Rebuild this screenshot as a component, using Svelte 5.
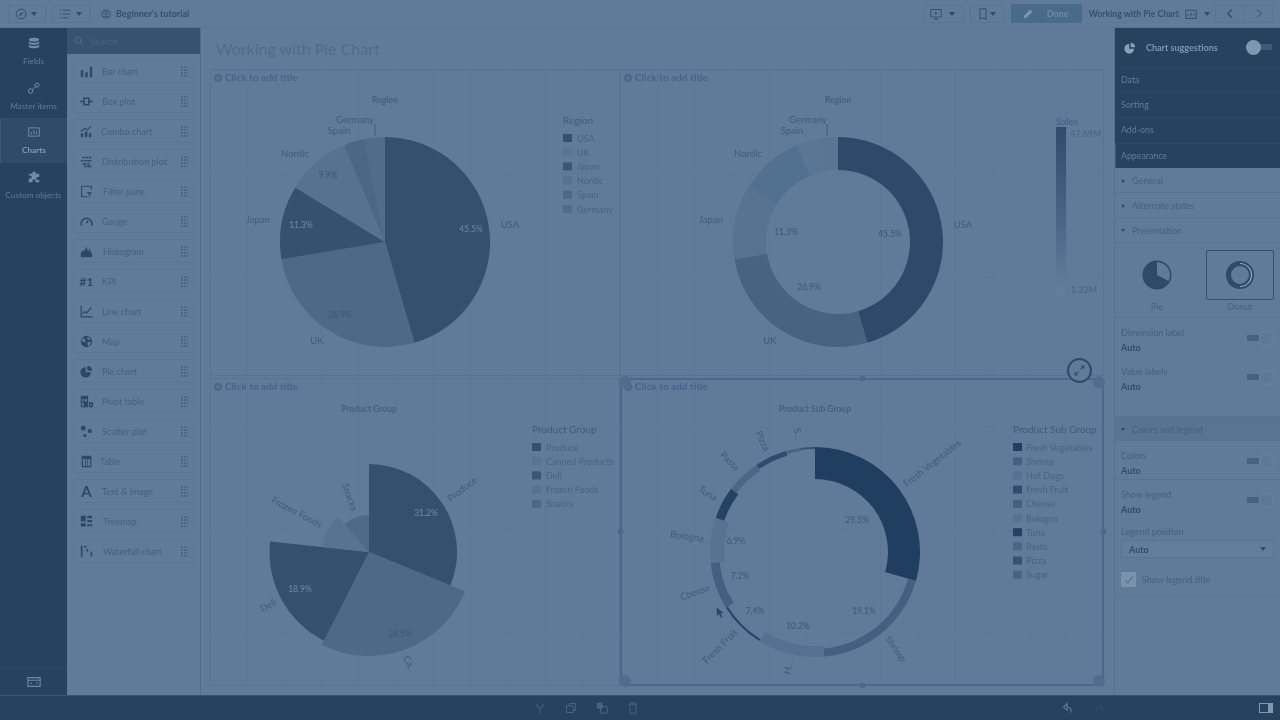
<script>
  const rad = (a) => (a * Math.PI) / 180;

  function sector(cx, cy, r0, r1, a0, a1) {
    const large = a1 - a0 > 180 ? 1 : 0;
    const p = (r, a) => `${(cx + r * Math.sin(rad(a))).toFixed(2)} ${(cy - r * Math.cos(rad(a))).toFixed(2)}`;
    if (r0 === 0) return `M${cx} ${cy}L${p(r1, a0)}A${r1} ${r1} 0 ${large} 1 ${p(r1, a1)}Z`;
    return `M${p(r0, a0)}L${p(r1, a0)}A${r1} ${r1} 0 ${large} 1 ${p(r1, a1)}L${p(r0, a1)}A${r0} ${r0} 0 ${large} 0 ${p(r0, a0)}Z`;
  }

  const regionLabels = (dx) => [
    { t: 'Germany', x: 355 + dx, y: 119 },
    { t: 'Spain', x: 339 + dx, y: 130 },
    { t: 'Nordic', x: 295 + dx, y: 153 },
    { t: 'Japan', x: 258 + dx, y: 219 },
    { t: 'USA', x: 510 + dx, y: 224 },
    { t: 'UK', x: 317 + dx, y: 340 }
  ];

  const cards = [
    {
      box: [211, 70, 408, 305], grid: 'upper', title: 'Region', tx: 385, ty: 100, cx: 385, cy: 242,
      slices: [
        [0, 105, 0, 163.8, '#34506f'],
        [0, 105, 163.8, 260.6, '#4c6988'],
        [0, 105, 260.6, 301.3, '#35516f'],
        [0, 105, 301.3, 337, '#557290'],
        [0, 105, 337, 348.5, '#4a6786'],
        [0, 105, 348.5, 360, '#4f6c8b']
      ],
      labels: regionLabels(0),
      lines: [[375, 124, 375, 136]],
      pcts: [
        { t: '45.5%', x: 471, y: 229, light: true },
        { t: '26.9%', x: 340, y: 315 },
        { t: '11.3%', x: 301, y: 225, light: true },
        { t: '9.9%', x: 328, y: 175 }
      ],
      legend: {
        x: 563, y: 120, tx: 577, head: 'Region',
        items: [['USA', '#34506f'], ['UK', '#58758f'], ['Japan', '#3a5675'], ['Nordic', '#557290'], ['Spain', '#4b6887'], ['Germany', '#4f6c8b']]
      }
    },
    {
      box: [621, 70, 482, 305], grid: 'upper', title: 'Region', tx: 838, ty: 100, cx: 838, cy: 242,
      slices: [
        [72, 105, 0, 163.8, '#2d4a6a'],
        [72, 105, 163.8, 260.6, '#466382'],
        [72, 105, 260.6, 301.3, '#567391'],
        [72, 105, 301.3, 337, '#527090'],
        [72, 105, 337, 348.5, '#5a7695'],
        [72, 105, 348.5, 360, '#597594']
      ],
      labels: regionLabels(453),
      lines: [[827, 124, 827, 136]],
      pcts: [
        { t: '45.5%', x: 890, y: 234 },
        { t: '26.9%', x: 809, y: 287 },
        { t: '11.3%', x: 786, y: 232 }
      ],
      scale: true
    },
    {
      box: [211, 379, 408, 306], grid: 'lower', title: 'Product Group', tx: 369, ty: 409, cx: 369, cy: 552,
      slices: [
        [0, 88, 0, 112.3, '#34506f'],
        [0, 104, 112.3, 207, '#4c6988'],
        [0, 99.5, 207, 276, '#34506f'],
        [0, 47, 276, 318.5, '#567391'],
        [0, 37, 318.5, 360, '#4d6a89']
      ],
      labels: [
        { t: 'Snacks', x: 350, y: 497, r: 70 },
        { t: 'Frozen Foods', x: 297, y: 512, r: 28 },
        { t: 'Produce', x: 462, y: 489, r: -37 },
        { t: 'Deli', x: 268, y: 605, r: -30 },
        { t: 'Ca...', x: 410, y: 664, r: 65 }
      ],
      lines: [],
      pcts: [
        { t: '31.2%', x: 426, y: 513, light: true },
        { t: '18.9%', x: 300, y: 589, light: true },
        { t: '28.5%', x: 400, y: 634 }
      ],
      legend: {
        x: 532, y: 429, tx: 546, head: 'Product Group',
        items: [['Produce', '#34506f'], ['Canned Products', '#58758f'], ['Deli', '#3a5675'], ['Frozen Foods', '#557290'], ['Snacks', '#4b6887']]
      }
    },
    {
      box: [621, 379, 482, 306], grid: 'lower', title: 'Product Sub Group', tx: 815, ty: 409, cx: 815, cy: 552,
      slices: [
        [73, 105, 0, 106, '#1f3e60'],
        [97, 105, 106, 175, '#42607f'],
        [94, 105, 175, 212, '#557191'],
        [103, 105, 212, 238, '#26456a'],
        [96, 105, 238, 264, '#42607f'],
        [91, 105, 264, 289, '#577392'],
        [96, 105, 289, 307, '#234264'],
        [98, 105, 307, 326, '#4a6786'],
        [100, 105, 326, 344, '#2e4c70'],
        [102, 105, 344, 352, '#476583'],
        [103, 105, 352, 360, '#35526f']
      ],
      labels: [
        { t: 'Fresh Vegetables', x: 932, y: 463, r: -38 },
        { t: 'Pizza', x: 763, y: 441, r: 65 },
        { t: 'S...', x: 798, y: 434, r: 80 },
        { t: 'Pasta', x: 730, y: 461, r: 45 },
        { t: 'Tuna', x: 708, y: 493, r: 32 },
        { t: 'Bologna', x: 687, y: 536, r: 8 },
        { t: 'Cheese', x: 695, y: 592, r: -20 },
        { t: 'Fresh Fruit', x: 720, y: 646, r: -45 },
        { t: 'H...', x: 788, y: 667, r: -75 },
        { t: 'Shrimp', x: 896, y: 649, r: 55 }
      ],
      lines: [],
      pcts: [
        { t: '29.5%', x: 857, y: 520 },
        { t: '6.9%', x: 736, y: 541 },
        { t: '7.2%', x: 740, y: 576 },
        { t: '19.1%', x: 864, y: 611 },
        { t: '7.4%', x: 755, y: 611 },
        { t: '10.2%', x: 798, y: 626 }
      ],
      legend: {
        x: 1013, y: 429, tx: 1026, head: 'Product Sub Group',
        items: [
          ['Fresh Vegetables', '#1f3e60'], ['Shrimp', '#42607f'], ['Hot Dogs', '#557191'], ['Fresh Fruit', '#2d4c70'], ['Cheese', '#42607f'],
          ['Bologna', '#577392'], ['Tuna', '#234264'], ['Pasta', '#4a6786'], ['Pizza', '#35526f'], ['Sugar', '#476583']
        ]
      },
      selected: true
    }
  ];

  const items = [
    { name: 'Bar chart', f: 'M1 6h3v9H1zM6.5 9h3v6h-3zM12 2h3v13h-3z' },
    { name: 'Box plot', f: 'M4 3h8v10H4zM6 5v6h4V5zM0 7h4v2H0zM12 7h4v2h-4z' },
    { name: 'Combo chart', dx: -1, f: 'M1 10h3v5H1zM6 8h3v7H6zM11 10h3v5h-3z', s: 'M1 8l5-4 3 2 5-5' },
    { name: 'Distribution plot', f: 'M3 2h3v2H3zM7 2h3v2H7zM11 2h3v2h-3zM1 6h3v2H1zM5 6h3v2H5zM9 6h5v2H9zM3 10h5v2H3zM9 10h3v2H9zM5 13h3v2H5zM9 13h5v2H9z' },
    { name: 'Filter pane', dx: 1, f: 'M8 9h7l-3 3v3h-1v-3z', s: 'M14 6V1.5H2v13h7' },
    { name: 'Gauge', s: 'M2 13A6.5 6.5 0 1 1 14 13M8 10l2-3', w: 2 },
    { name: 'Histogram', dx: 1, f: 'M1 15V9l2-1 1-2 2 1 1-5 2 3 1 3 2-4 1 4 2 3v4z' },
    { name: 'KPI', kpi: true },
    { name: 'Line chart', s: 'M1.5 1v13.5h14M3 11l3-3 2 2 6-7', w: 1.5 },
    { name: 'Map', f: 'M8 1a7 7 0 1 0 0 14A7 7 0 0 0 8 1zM3 4l3 1 1 3-2 1-3-2zM9 2l4 2-2 2-2-1zM9 9l4-1 0 3-3 3z' },
    { name: 'Pie chart', f: 'M7 2.5A6.5 6.5 0 1 0 13.5 9H7zM9 1v6h6a6 6 0 0 0-6-6z' },
    { name: 'Pivot table', f: 'M1 1h9v14H1zM2.500 5v3h2V5zM6 5v3h2.500V5zM2.500 9.500v4h2v-4zM11 9h5v6h-5zM12.500 11v2h2v-2z' },
    { name: 'Scatter plot', f: 'M4 1a3 3 0 1 0 0 6 3 3 0 0 0 0-6zM12 5a2.500 2.500 0 1 0 0 5 2.500 2.500 0 0 0 0-5zM6 11a2 2 0 1 0 0 4 2 2 0 0 0 0-4z' },
    { name: 'Table', dx: -2, f: 'M2 1h12v14H2zM3.500 5v8.500h2.500V5zM7 5v8.500h2V5zM10 5v8.500h2.500V5z' },
    { name: 'Text & image', letter: 'A' },
    { name: 'Treemap', dx: 1, f: 'M1 1h6v7H1zM9 1h6v3H9zM9 6h6v3H9zM1 10h6v4H1zM9 11h3v3H9zM13 11h2v3h-2z' },
    { name: 'Waterfall chart', dx: 1, f: 'M1 1h2v14H1zM5 1h3v2H5zM8 5h2v3H8zM13 8h2v6h-2z' }
  ];

  const rail = [
    { name: 'Fields', d: 'M8 1c4 0 7 1 7 2.500S12 6 8 6 1 5 1 3.500 4 1 8 1zM1 5.500C2 7 5 7.500 8 7.500S14 7 15 5.500V8c0 1.500-3 2.500-7 2.500S1 9.500 1 8zM1 10c1 1.500 4 2 7 2s6-.5 7-2v2.500C15 14 12 15 8 15s-7-1-7-2.500z' },
    { name: 'Master items', s: 'M5 11l6-6M3.500 9a3 3 0 1 0 3 3 3 3 0 0 0-3-3zM12 1.500a2.700 2.700 0 1 0 2.700 2.700A2.700 2.700 0 0 0 12 1.500z' },
    { name: 'Charts', active: true, s: 'M1 2.500h14v11H1zM4.500 11V8M8 11V5.500M11.500 11V7' },
    { name: 'Custom objects', d: 'M6 1h4v2.500h5V8h-2a2 2 0 1 0 0 4h2v3h-5v-2a2 2 0 1 0-4 0v2H1v-5h2a2 2 0 1 0 0-4H1V3.500h5z' }
  ];

  const editIcons = [
    { s: 'M8 15V7M4 2v4l4 2 4-2V2' },
    { s: 'M6 5V2h8v9h-3M2 5h9v9H2z' },
    { f: 'M1 1h8v8H1z', s: 'M6 6h9v9H6z' },
    { s: 'M3 3h10M5 3V1h6v2M4 3v12h8V3' }
  ];
</script>

{#snippet toggle(on)}
  <span class="toggle" class:off={!on}><i></i></span>
{/snippet}

{#snippet caret()}
  <span class="caret"></span>
{/snippet}

<div class="app">
  <header class="toolbar">
    <div class="tbtn" style="width:38px">
      <svg viewBox="0 0 16 16" class="ti"><circle cx="8" cy="8" r="6.500" /><path d="M11 5L9 9 5 11 7 7z" class="solid" /></svg>
      {@render caret()}
    </div>
    <div class="tbtn" style="width:39px">
      <svg viewBox="0 0 16 16" class="ti"><path d="M1 3h2M5 3h10M1 8h2M5 8h10M1 13h2M5 13h7" /></svg>
      {@render caret()}
    </div>
    <svg viewBox="0 0 16 16" class="globe"><circle cx="8" cy="8" r="7" /><path d="M2 8h12M8 1v14M3 4h10M3 12h10" /></svg>
    <b class="app-name">Beginner's tutorial</b>
    <div class="spacer"></div>
    <div class="tbtn" style="width:41px">
      <svg viewBox="0 0 16 16" class="ti"><path d="M1 2h14v10H1zM8 12v3M5 15h6" /><path d="M6.500 5l4 2-4 2z" class="solid" /></svg>
      {@render caret()}
    </div>
    <div class="tbtn" style="width:35px">
      <svg viewBox="0 0 16 16" class="ti"><path d="M4 1h8v14l-4-2-4 2z" /></svg>
      {@render caret()}
    </div>
    <div class="done">
      <svg viewBox="0 0 16 16"><path d="M2 14l1-4 8-8 3 3-8 8z" /></svg>
      <span>Done</span>
    </div>
    <b class="sheet-name">Working with Pie Chart</b>
    <svg viewBox="0 0 16 16" class="ti sheeticon"><path d="M1 3h14v11H1zM4 11V8M8 11V6M12 11V7" /></svg>
    {@render caret()}
    <div class="nav first"><svg viewBox="0 0 16 16"><path d="M10 2L4 8l6 6" /></svg></div>
    <div class="nav"><svg viewBox="0 0 16 16" class="dim"><path d="M6 2l6 6-6 6" /></svg></div>
  </header>

  <div class="body">
    <nav class="rail">
      {#each rail as r}
        <div class="rail-item" class:active={r.active}>
          <svg viewBox="0 0 16 16">
            {#if r.d}<path d={r.d} class="solid" />{/if}
            {#if r.s}<path d={r.s} />{/if}
          </svg>
          <span>{r.name}</span>
        </div>
      {/each}
      <div class="spacer"></div>
      <div class="rail-foot">
        <svg viewBox="0 0 16 16"><path d="M1 3h14v10H1zM1 6h14" /><path d="M4 8l2 1.500L4 11zM12 8l-2 1.500 2 1.500z" class="solid" /></svg>
      </div>
    </nav>

    <aside class="assets">
      <div class="search">
        <svg viewBox="0 0 16 16"><circle cx="6.500" cy="6.500" r="5" /><path d="M10 10l5 5" /></svg>
        <span>Search</span>
      </div>
      <ul>
        {#each items as it}
          <li>
            <span class="ic">
              {#if it.kpi}
                <b class="kpi">#1</b>
              {:else if it.letter}
                <b class="letter">{it.letter}</b>
              {:else}
                <svg viewBox="0 0 16 16">
                  {#if it.f}<path d={it.f} fill-rule="evenodd" class="solid" />{/if}
                  {#if it.s}<path d={it.s} stroke-width={it.w || 1.3} />{/if}
                </svg>
              {/if}
            </span>
            <span class="label" style="margin-left:{it.dx || 0}px">{it.name}</span>
            <span class="grip"></span>
          </li>
        {/each}
      </ul>
    </aside>

    <main>
      <h1>Working with Pie Chart</h1>
      <div class="sheet">
        {#each cards as c}
          <section class="card {c.grid}" class:selected={c.selected}>
            <div class="card-title">
              <svg viewBox="0 0 16 16"><circle cx="8" cy="8" r="8" /><path d="M4 8h8M8 4v8" /></svg>
              <b>Click to add title</b>
            </div>
            <svg class="chart" viewBox={c.box.join(' ')}>
              <text class="ctitle" x={c.tx} y={c.ty}>{c.title}</text>
              {#each c.slices as s}
                <path d={sector(c.cx, c.cy, s[0], s[1], s[2], s[3])} fill={s[4]} />
              {/each}
              {#each c.lines as l}
                <line x1={l[0]} y1={l[1]} x2={l[2]} y2={l[3]} class="leader" />
              {/each}
              {#each c.labels as l}
                <text class="dim-label" x={l.x} y={l.y} transform={l.r ? `rotate(${l.r} ${l.x} ${l.y})` : undefined}>{l.t}</text>
              {/each}
              {#each c.pcts as p}
                <text class="pct" class:light={p.light} x={p.x} y={p.y}>{p.t}</text>
              {/each}
              {#if c.legend}
                <text class="lhead" x={c.legend.x} y={c.legend.y}>{c.legend.head}</text>
                {#each c.legend.items as li, i}
                  <rect x={c.legend.x} y={c.legend.y + 14 + i * 14.2} width="9" height="8" fill={li[1]} />
                  <text class="litem" x={c.legend.tx} y={c.legend.y + 18 + i * 14.2}>{li[0]}</text>
                {/each}
              {/if}
              {#if c.scale}
                <defs>
                  <linearGradient id="sales" x1="0" y1="0" x2="0" y2="1">
                    <stop offset="0" stop-color="#2f4c6d" />
                    <stop offset="0.5" stop-color="#466384" />
                    <stop offset="1" stop-color="#647f9d" />
                  </linearGradient>
                </defs>
                <text class="lhead" x="1056" y="121">Sales</text>
                <rect x="1056" y="127" width="10" height="168" fill="url(#sales)" />
                <text class="litem" x="1070" y="133">47.69M</text>
                <text class="litem" x="1071" y="289">1.32M</text>
              {/if}
            </svg>
            {#if c.selected}
              <span class="h c tl"></span><span class="h c tr"></span><span class="h c bot-l"></span><span class="h c bot-r"></span>
              <span class="h m mt"></span><span class="h m mb"></span><span class="h m ml"></span><span class="h m mr"></span>
              <span class="expand">
                <svg viewBox="0 0 16 16"><path d="M9 7l4-4M10 2.500h3.500V6M7 9l-4 4M6 13.500H2.500V10" /></svg>
              </span>
              <svg class="cursor" viewBox="0 0 12 16"><path d="M1 1v12l3-3 2.500 5 2-1L6 9h4z" /></svg>
            {/if}
          </section>
        {/each}
      </div>
    </main>

    <aside class="props">
      <div class="props-dark">
        <div class="suggest">
          <svg viewBox="0 0 16 16"><path d="M7 2.500A6.500 6.500 0 1 0 13.500 9H7zM9 1v6h6a6 6 0 0 0-6-6z" /></svg>
          <b>Chart suggestions</b>
          {@render toggle(false)}
        </div>
        <div class="tab">Data</div>
        <div class="tab">Sorting</div>
        <div class="tab tall">Add-ons</div>
        <div class="tab last">Appearance</div>
      </div>
      <div class="sec"><span class="tri right"></span>General</div>
      <div class="sec"><span class="tri right"></span>Alternate states</div>
      <div class="sec"><span class="tri"></span>Presentation</div>
      <div class="pres">
        <div class="style-opt">
          <div class="thumb">
            <svg viewBox="0 0 30 30"><circle cx="15" cy="15" r="14.500" class="pie" /><path d="M15 15V2a13 13 0 0 1 11.500 19z" class="pie-cut" /></svg>
          </div>
          <span>Pie</span>
        </div>
        <div class="style-opt">
          <div class="thumb picked">
            <svg viewBox="0 0 30 30"><circle cx="15" cy="15" r="11.500" class="ring" /><path d="M15 3.500a11.500 11.500 0 0 1 0 23" class="ring-cut" /></svg>
          </div>
          <span>Donut</span>
        </div>
      </div>
      <div class="prop">
        <div><span>Dimension label</span><b>Auto</b></div>
        {@render toggle(true)}
      </div>
      <div class="prop">
        <div><span>Value labels</span><b>Auto</b></div>
        {@render toggle(true)}
      </div>
      <div class="sec band"><span class="tri"></span>Colors and legend</div>
      <div class="prop lined">
        <div><span>Colors</span><b>Auto</b></div>
        {@render toggle(true)}
      </div>
      <div class="prop">
        <div><span>Show legend</span><b>Auto</b></div>
        {@render toggle(true)}
      </div>
      <div class="legend-pos">
        <span>Legend position</span>
        <div class="select"><b>Auto</b>{@render caret()}</div>
      </div>
      <div class="check">
        <span class="box"><svg viewBox="0 0 16 16"><path d="M3 8l3.500 4L13 3" /></svg></span>
        <span>Show legend title</span>
      </div>
    </aside>
  </div>

  <footer class="foot">
    <div class="edit-icons">
      {#each editIcons as b}
        <svg viewBox="0 0 16 16">
          {#if b.f}<path d={b.f} class="solid" />{/if}
          <path d={b.s} />
        </svg>
      {/each}
    </div>
    <div class="undo">
      <svg viewBox="0 0 16 16"><path d="M12 14c1-5-1-7-6-7M7 2L2 7l5 4z" class="strong" /></svg>
      <svg viewBox="0 0 16 16" class="faint"><path d="M4 12c0-4 2-5 6-5M9 3l4 4-4 3" /></svg>
    </div>
    <div class="panel-btn"><i></i></div>
  </footer>
</div>

<style>
  :global(body) {
    margin: 0;
    background: #607b99;
  }
  .app {
    width: 1280px;
    height: 720px;
    overflow: hidden;
    display: flex;
    flex-direction: column;
    background: #607b99;
    color: #43607f;
    font-family: Lato, "Open Sans", sans-serif;
    font-size: 9px;
    filter: blur(0.45px);
  }
  svg {
    display: block;
    fill: none;
    stroke: currentColor;
    stroke-width: 1.3;
  }
  svg .solid {
    fill: currentColor;
    stroke: none;
  }
  .spacer {
    flex: 1;
  }

  .toolbar {
    height: 28px;
    flex: none;
    display: flex;
    align-items: center;
    box-sizing: border-box;
    padding: 0 7px 0 8px;
    border-bottom: 1px solid #5a7594;
    color: #2f4b6c;
  }
  .tbtn {
    height: 18px;
    margin-right: 6px;
    box-sizing: border-box;
    border: 1px solid #587393;
    border-radius: 2px;
    display: flex;
    align-items: center;
    justify-content: space-between;
    padding: 0 8px 0 6px;
  }
  .ti {
    width: 12px;
    height: 12px;
    color: #34506f;
  }
  .caret {
    width: 0;
    height: 0;
    border-left: 3.5px solid transparent;
    border-right: 3.5px solid transparent;
    border-top: 4px solid #2f4b6c;
  }
  .globe {
    width: 10px;
    height: 10px;
    margin-left: 4px;
    color: #3f5b7b;
    stroke-width: 1.6;
  }
  .app-name {
    margin-left: 5px;
    font-size: 9px;
    color: #34506f;
  }
  .done {
    width: 71px;
    height: 19px;
    background: #4a6a8b;
    display: flex;
    align-items: center;
    color: #6e8aa6;
    font-weight: 700;
    box-sizing: border-box;
    padding-left: 11px;
  }
  .done svg {
    width: 12px;
    height: 12px;
    fill: #7c96b0;
    stroke: none;
  }
  .done span {
    margin-left: 13px;
  }
  .sheet-name {
    margin-left: 7px;
    font-size: 8.7px;
    color: #34506f;
  }
  .sheeticon {
    margin: 0 7px 0 6px;
  }
  .nav {
    width: 28px;
    height: 18px;
    box-sizing: border-box;
    border: 1px solid #587393;
    border-left: none;
    display: flex;
    align-items: center;
    justify-content: center;
    color: #2f4b6c;
  }
  .nav.first {
    margin-left: 5px;
    width: 30px;
    border-left: 1px solid #587393;
  }
  .nav svg {
    width: 11px;
    height: 11px;
    stroke-width: 2;
  }
  .nav svg.dim {
    color: #45617f;
  }

  .body {
    flex: 1;
    display: flex;
    min-height: 0;
  }

  .rail {
    width: 67px;
    flex: none;
    background: #26425f;
    display: flex;
    flex-direction: column;
    color: #5f7b98;
    box-sizing: border-box;
    padding-top: 1px;
  }
  .rail-item {
    height: 44.7px;
    display: flex;
    flex-direction: column;
    align-items: center;
    padding-top: 8px;
    box-sizing: border-box;
    gap: 7px;
    font-size: 8.2px;
    line-height: 10px;
  }
  .rail-item svg {
    width: 12px;
    height: 12px;
    color: #728ca6;
  }
  .rail-item.active {
    background: #2f4b69;
    border-left: 1px solid #3b5775;
    color: #8198b0;
    font-weight: 700;
  }
  .rail-foot {
    height: 26px;
    border-top: 1px solid #2c4866;
    display: flex;
    align-items: center;
    justify-content: center;
  }
  .rail-foot svg {
    width: 14px;
    height: 14px;
    color: #6c87a2;
  }

  .assets {
    width: 134px;
    flex: none;
    border-right: 1px solid #4f6c8b;
    box-sizing: border-box;
  }
  .search {
    height: 26px;
    background: #375270;
    display: flex;
    align-items: center;
    padding-left: 7px;
    color: #476380;
    gap: 7px;
  }
  .search svg {
    width: 10px;
    height: 10px;
    color: #56728f;
  }
  .assets ul {
    list-style: none;
    margin: 0;
    padding: 5px 6px 0;
    display: flex;
    flex-direction: column;
    gap: 6px;
  }
  .assets li {
    height: 24px;
    box-sizing: border-box;
    border: 1px solid #5a7695;
    border-radius: 2px;
    display: flex;
    align-items: center;
    padding-left: 6px;
    position: relative;
  }
  .ic {
    width: 13px;
    height: 13px;
    color: #2c4866;
    display: flex;
    align-items: center;
    justify-content: center;
    margin-right: 9px;
    flex: none;
  }
  .ic svg {
    width: 13px;
    height: 13px;
  }
  .kpi {
    font-size: 12px;
    white-space: nowrap;
  }
  .letter {
    font-size: 15px;
  }
  .label {
    flex: 1;
  }
  .grip {
    width: 8px;
    height: 12px;
    margin-right: 5px;
    background:
      linear-gradient(90deg, #607b99 1px, transparent 1px) 0 0 / 3px 3px,
      linear-gradient(#607b99 1px, transparent 1px) 0 0 / 3px 3px,
      #4a6685;
  }

  main {
    flex: 1;
    min-width: 0;
  }
  h1 {
    margin: 0;
    height: 42px;
    line-height: 42px;
    padding-left: 15px;
    font-size: 16px;
    font-weight: 400;
    color: #4f6b8b;
  }
  .sheet {
    margin-left: 10px;
    width: 892px;
    display: grid;
    grid-template-columns: 408px 482px;
    grid-template-rows: 305px 306px;
    column-gap: 2px;
    row-gap: 4px;
  }
  .card {
    position: relative;
    box-sizing: border-box;
    outline: 1px solid #587493;
    background-image:
      linear-gradient(90deg, #5c7896 1px, transparent 1px),
      linear-gradient(#5c7896 1px, transparent 1px);
    background-size: 37.2px 103px;
    background-position: 36px 0;
  }
  .card.lower {
    background-position: 36px 48px;
  }
  .card.selected {
    outline: 2px solid #4a698a;
    outline-offset: -1px;
  }
  .chart {
    width: 100%;
    height: 100%;
    stroke: none;
  }
  .card-title {
    position: absolute;
    left: 3px;
    top: 2px;
    display: flex;
    align-items: center;
    gap: 3px;
    color: #47638a;
    font-size: 10px;
    line-height: 11px;
  }
  .card-title svg {
    width: 8px;
    height: 8px;
    fill: #4b6889;
    stroke: #607b99;
    stroke-width: 2;
  }
  .card-title svg circle {
    stroke: none;
  }
  .ctitle {
    font-size: 8.5px;
    font-weight: 700;
    fill: #42607f;
    text-anchor: middle;
    dominant-baseline: central;
  }
  .dim-label {
    font-size: 9.5px;
    fill: #3f5b7c;
    text-anchor: middle;
    dominant-baseline: central;
  }
  .pct {
    font-size: 8.5px;
    fill: #3b5776;
    text-anchor: middle;
    dominant-baseline: central;
  }
  .pct.light {
    fill: #6f88a3;
  }
  .leader {
    stroke: #3f5b7c;
    stroke-width: 1;
  }
  .lhead {
    font-size: 10px;
    fill: #3f5b7c;
    dominant-baseline: central;
  }
  .litem {
    font-size: 9px;
    fill: #476382;
    dominant-baseline: central;
  }

  .h {
    position: absolute;
    background: #4f6d8d;
  }
  .h.c {
    width: 12px;
    height: 12px;
    border-radius: 50%;
  }
  .tl { left: -2px; top: -3px; }
  .tr { right: -2px; top: -3px; }
  .bot-l { left: -2px; bottom: -2px; }
  .bot-r { right: -2px; bottom: -2px; }
  .h.m {
    width: 5px;
    height: 5px;
    background: #4a6888;
  }
  .mt { left: 239px; top: -3px; }
  .mb { left: 239px; bottom: -3px; }
  .ml { left: -3px; top: 150px; }
  .mr { right: -3px; top: 150px; }
  .expand {
    position: absolute;
    left: 446px;
    top: -21px;
    width: 25px;
    height: 25px;
    box-sizing: border-box;
    border: 2px solid #2d4a69;
    border-radius: 50%;
    display: flex;
    align-items: center;
    justify-content: center;
    background: #607b99;
    color: #2d4a69;
  }
  .expand svg {
    width: 13px;
    height: 13px;
  }
  .cursor {
    position: absolute;
    left: 95px;
    top: 227px;
    width: 9px;
    height: 13px;
    fill: #2b4767;
    stroke: none;
  }

  .props {
    width: 166px;
    flex: none;
    border-left: 1px solid #567290;
    box-sizing: border-box;
  }
  .props-dark {
    background: #26425f;
    color: #5f7b98;
  }
  .suggest {
    height: 39px;
    display: flex;
    align-items: center;
    box-sizing: border-box;
    padding: 0 7px 0 9px;
    color: #7e95ae;
  }
  .suggest svg {
    width: 12px;
    height: 12px;
    fill: #8aa0b7;
    stroke: none;
  }
  .suggest b {
    margin-left: 10px;
    flex: 1;
    font-size: 9px;
  }
  .tab {
    height: 25px;
    line-height: 23px;
    padding-left: 6px;
    box-sizing: border-box;
    border-top: 1px solid #2c4866;
    font-size: 8.8px;
  }
  .tab.tall {
    height: 26px;
  }
  .tab.last {
    border-left: 1px solid #3b5775;
    padding-left: 5px;
  }
  .sec {
    height: 25px;
    box-sizing: border-box;
    border-bottom: 1px solid #587493;
    display: flex;
    align-items: center;
    padding: 1px 0 0 6px;
  }
  .sec.band {
    margin-top: 20px;
    background: #587492;
    border-top: 1px solid #557190;
  }
  .tri {
    width: 0;
    height: 0;
    margin-right: 7px;
    border-left: 2.5px solid transparent;
    border-right: 2.5px solid transparent;
    border-top: 3.5px solid #2f4b6c;
  }
  .tri.right {
    border-top: 2.5px solid transparent;
    border-bottom: 2.5px solid transparent;
    border-left: 3.5px solid #2f4b6c;
    border-right: none;
    margin-left: 1px;
  }
  .pres {
    height: 75px;
    box-sizing: border-box;
    border-bottom: 1px solid #587493;
    display: flex;
    padding: 7px 6px 0 8px;
    justify-content: space-between;
  }
  .style-opt {
    width: 68px;
    display: flex;
    flex-direction: column;
    align-items: center;
    gap: 1px;
  }
  .thumb {
    width: 68px;
    height: 50px;
    box-sizing: border-box;
    border: 1px solid transparent;
    border-radius: 2px;
    display: flex;
    align-items: center;
    justify-content: center;
  }
  .thumb.picked {
    border: 1px solid #34506f;
  }
  .thumb svg {
    width: 30px;
    height: 30px;
    stroke: none;
  }
  .pie {
    fill: #2d4a69;
  }
  .pie-cut {
    fill: #607b99;
  }
  .ring {
    stroke: #2d4a69;
    stroke-width: 5;
  }
  .ring-cut {
    stroke: #93a7bb;
    stroke-width: 1.2;
  }
  .prop {
    height: 39px;
    box-sizing: border-box;
    padding: 8px 6px 0;
    display: flex;
    justify-content: space-between;
    align-items: flex-start;
  }
  .prop.lined {
    border-bottom: 1px solid #587493;
  }
  .prop span:not(.toggle) {
    display: block;
    line-height: 14px;
  }
  .prop b {
    display: block;
    line-height: 16px;
    color: #2f4b6c;
  }
  .toggle {
    width: 27px;
    height: 15px;
    position: relative;
    flex: none;
    margin-top: 5px;
  }
  .toggle::before {
    content: "";
    position: absolute;
    left: 0;
    top: 4px;
    width: 12px;
    height: 6px;
    background: #46627f;
  }
  .toggle i {
    position: absolute;
    right: 0;
    top: 0;
    width: 15px;
    height: 15px;
    border-radius: 50%;
    background: #5c7896;
    border: 1px solid #6b86a2;
    box-sizing: border-box;
  }
  .toggle.off {
    margin-top: 0;
  }
  .toggle.off::before {
    left: 8px;
    width: 18px;
    background: #3d5a79;
  }
  .toggle.off i {
    left: 0;
    right: auto;
    background: #7f98b2;
    border: none;
  }
  .legend-pos {
    padding: 7px 6px 0;
  }
  .select {
    margin-top: 3px;
    height: 18px;
    box-sizing: border-box;
    border: 1px solid #587493;
    display: flex;
    align-items: center;
    justify-content: space-between;
    padding: 0 7px;
    background: #637e9c;
    color: #2f4b6c;
  }
  .check {
    margin-top: 14px;
    padding: 0 6px 8px;
    display: flex;
    align-items: center;
    gap: 6px;
    border-bottom: 1px solid #587493;
  }
  .box {
    width: 15px;
    height: 15px;
    background: #7a93ad;
    border-radius: 1px;
    display: flex;
    align-items: center;
    justify-content: center;
    color: #607b99;
  }
  .box svg {
    width: 12px;
    height: 12px;
    stroke-width: 2;
  }

  .foot {
    height: 25px;
    flex: none;
    background: #26425f;
    border-top: 1px solid #365270;
    box-sizing: border-box;
    display: flex;
    align-items: center;
    color: #47647f;
    padding-left: 534px;
  }
  .edit-icons, .undo {
    display: flex;
    gap: 19px;
  }
  .edit-icons svg, .undo svg {
    width: 12px;
    height: 12px;
  }
  .undo {
    margin-left: 423px;
  }
  .undo .strong {
    stroke: #5a7591;
    stroke-width: 1.6;
  }
  .faint {
    color: #34506c;
  }
  .panel-btn {
    width: 14px;
    height: 10px;
    margin-left: 154px;
    background: #8298ae;
    box-sizing: border-box;
    padding: 1px 5px 1px 1px;
  }
  .panel-btn i {
    display: block;
    height: 100%;
    background: #26425f;
  }
</style>
